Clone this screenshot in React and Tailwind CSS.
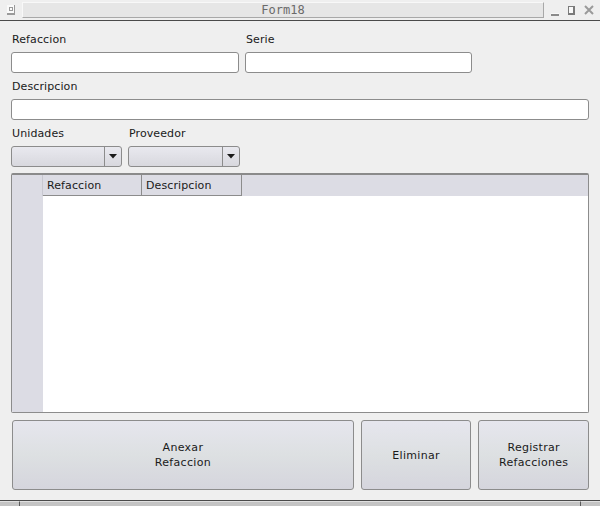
import React from 'react';

const font = { fontFamily: '"DejaVu Sans", "Liberation Sans", sans-serif' };

const Label = ({ children, className = '' }) => (
  <div className={`text-[11px] leading-[13px] tracking-[0.1px] text-[#1a1a1a] ${className}`}>{children}</div>
);

const Field = ({ className = '' }) => (
  <div className={`h-[21px] bg-white border border-[#8c8c8c] rounded-[3px] ${className}`} />
);

const Combo = ({ className = '' }) => (
  <div
    className={`h-[21px] flex border border-[#8c8c8c] rounded-[3px] bg-gradient-to-b from-[#e9e9ef] to-[#d8d8de] ${className}`}
  >
    <div className="flex-1" />
    <div className="w-[17px] border-l border-[#8c8c8c] flex items-center justify-center">
      <svg width="8" height="5" viewBox="0 0 8 5">
        <path d="M0 0 L8 0 L4 4.5 Z" fill="#1a1a1a" />
      </svg>
    </div>
  </div>
);

const Button = ({ children, className = '' }) => (
  <button
    className={`h-[70px] border border-[#8c8c8c] rounded-[3px] bg-gradient-to-b from-[#e6e6ee] via-[#dde0e2] to-[#d5d5dd] text-[11px] leading-[15px] tracking-[0.3px] text-[#1a1a1a] flex flex-col items-center justify-center ${className}`}
  >
    {children}
  </button>
);

const App = () => {
  return (
    <div className="w-[600px] h-[506px] bg-[#efefef] flex flex-col overflow-hidden" style={font}>
      {/* title bar */}
      <div className="h-[21px] border-b border-[#4a4a4a] flex items-center">
        <div className="w-[22px] flex justify-center">
          <div className="w-[8px] h-[10px] bg-[#fafafa] border-b-2 border-r border-[#9a9a9a] flex items-center justify-center">
            <div className="w-[4px] h-[4px] border border-[#9a9a9a]" />
          </div>
        </div>
        <div className="w-[522px] h-[16px] bg-[#e6e6e6] border border-t-[#f8f8f8] border-l-[#f8f8f8] border-b-[#a8a8a8] border-r-[#a8a8a8] flex items-center justify-center">
          <span
            className="text-[12px] leading-[14px] text-[#6a6a6a]"
            style={{ fontFamily: '"DejaVu Sans Mono", "Liberation Mono", monospace' }}
          >
            Form18
          </span>
        </div>
        <div className="flex-1 flex items-center justify-around pr-[2px] pl-[2px]">
          <div className="w-[8px] h-[3px] bg-[#f8f8f8] border-b-2 border-[#8a8a8a] mt-[8px]" />
          <div className="w-[7px] h-[9px] bg-[#f8f8f8] border border-r-2 border-b-2 border-[#7a7a7a]" />
          <svg width="10" height="10" viewBox="0 0 10 10">
            <path d="M1 1 L9 9 M9 1 L1 9" stroke="#9a9a9a" strokeWidth="2" />
          </svg>
        </div>
      </div>

      <div className="px-[11px] flex flex-col">
        <div className="flex gap-[6px] mt-[12px]">
          <Label className="w-[228px] pl-[1px]">Refaccion</Label>
          <Label className="w-[227px] pl-[1px]">Serie</Label>
        </div>
        <div className="flex gap-[6px] mt-[6px]">
          <Field className="w-[228px]" />
          <Field className="w-[227px]" />
        </div>

        <Label className="mt-[7px] pl-[1px]">Descripcion</Label>
        <Field className="mt-[6px] w-[578px]" />

        <div className="flex gap-[6px] mt-[7px]">
          <Label className="w-[111px] pl-[1px]">Unidades</Label>
          <Label className="w-[112px] pl-[1px]">Proveedor</Label>
        </div>
        <div className="flex gap-[6px] mt-[6px]">
          <Combo className="w-[111px]" />
          <Combo className="w-[112px]" />
        </div>

        {/* table */}
        <div className="mt-[6px] w-[578px] h-[240px] border border-[#8c8c8c] border-t-2 border-t-[#8a8a8a] rounded-[2px] bg-white flex flex-col overflow-hidden">
          <div className="h-[21px] bg-[#dcdce4] flex text-[11px] leading-[13px] tracking-[0.1px] text-[#1a1a1a]">
            <div className="w-[31px] border-r border-[#c8c8d0]" />
            <div className="w-[99px] border border-t-0 border-l-0 border-[#8c8c8c] flex items-center pl-[4px]">
              Refaccion
            </div>
            <div className="w-[100px] border border-t-0 border-l-0 border-[#8c8c8c] flex items-center pl-[4px]">
              Descripcion
            </div>
          </div>
          <div className="flex-1 flex">
            <div className="w-[31px] bg-[#dcdce4]" />
            <div className="flex-1 bg-white" />
          </div>
        </div>

        <div className="flex gap-[7px] mt-[7px] pl-[1px]">
          <Button className="w-[343px]">
            <span>Anexar</span>
            <span>Refaccion</span>
          </Button>
          <Button className="w-[111px]">
            <span>Eliminar</span>
          </Button>
          <Button className="w-[111px]">
            <span>Registrar</span>
            <span>Refacciones</span>
          </Button>
        </div>
      </div>

      <div className="flex-1" />
      {/* bottom scroll strip */}
      <div className="h-[6px] border-t border-[#4a4a4a] bg-[#c4c4c4] flex">
        <div className="w-[20px] border-r border-[#5a5a5a] border-t border-t-[#e0e0e0]" />
        <div className="flex-1 border-t border-[#e0e0e0]" />
        <div className="w-[20px] border-l border-[#5a5a5a] border-t border-t-[#e0e0e0]" />
      </div>
    </div>
  );
};

export default App;
